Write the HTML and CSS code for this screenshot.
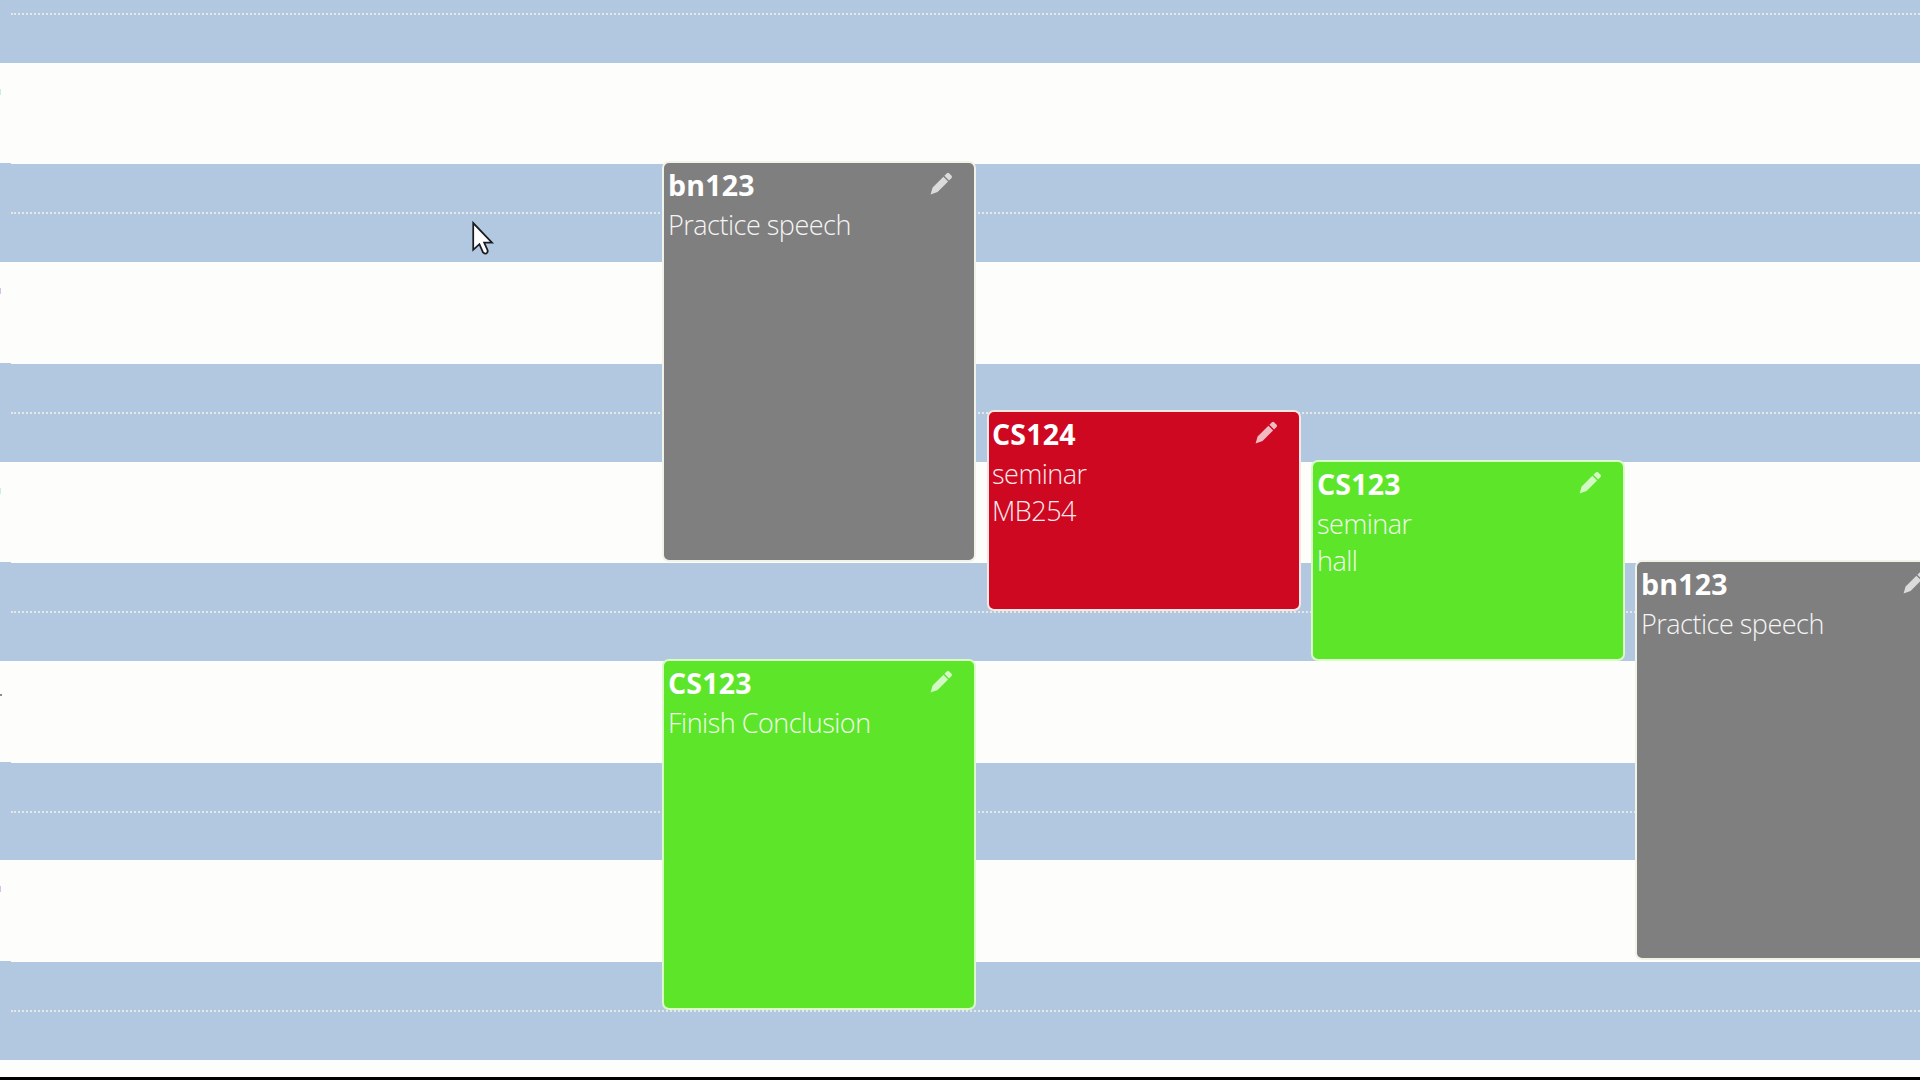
FILE: index.html
```
<!DOCTYPE html>
<html lang="en">
<head>
<meta charset="utf-8">
<title>Timetable</title>
<link rel="stylesheet" href="styles.css">
</head>
<body>
<svg class="defs" width="0" height="0" aria-hidden="true">
  <symbol id="pencil" viewBox="0 0 24 24">
    <path d="M0.6 23.4L2.7 16.2L14 4.9L18.9 9.8L7.9 20.8Z M15 3.9L17.7 1.2Q18.8 0.3 19.9 1.2L22.5 3.8Q23.5 5 22.5 6.2L19.9 8.8Z"/>
  </symbol>
</svg>
<main class="calendar">
  <div class="slots">
    <div class="row first"><i class="gutter"></i><i class="half"></i></div>
    <div class="row plain"><i class="tick pale"></i></div>
    <div class="row"><i class="gutter"></i><i class="half"></i></div>
    <div class="row plain"><i class="tick"></i></div>
    <div class="row"><i class="gutter"></i><i class="half"></i></div>
    <div class="row plain"><i class="tick pale"></i></div>
    <div class="row"><i class="gutter"></i><i class="half"></i></div>
    <div class="row plain"><i class="tick dark"></i></div>
    <div class="row"><i class="gutter"></i><i class="half"></i></div>
    <div class="row plain"><i class="tick"></i></div>
    <div class="row"><i class="gutter"></i><i class="half"></i></div>
    <div class="row tail"></div>
  </div>
  <article class="event grey speech-a">
    <header><h2>bn123</h2><svg class="edit"><use href="#pencil"/></svg></header>
    <p>Practice speech</p>
  </article>
  <article class="event green conclusion">
    <header><h2>CS123</h2><svg class="edit"><use href="#pencil"/></svg></header>
    <p>Finish Conclusion</p>
  </article>
  <article class="event red seminar-a">
    <header><h2>CS124</h2><svg class="edit"><use href="#pencil"/></svg></header>
    <p>seminar</p><p>MB254</p>
  </article>
  <article class="event green seminar-b">
    <header><h2>CS123</h2><svg class="edit"><use href="#pencil"/></svg></header>
    <p>seminar</p><p>hall</p>
  </article>
  <article class="event grey speech-b">
    <header><h2>bn123</h2><svg class="edit"><use href="#pencil"/></svg></header>
    <p>Practice speech</p>
  </article>
  <svg class="cursor" viewBox="0 0 20 32"><path d="M1 1V27L7 21.5L10.5 29.5Q12 31.3 14 30.2Q15.6 29 14.8 27L11.6 20H19.2Z"/></svg>
</main>
</body>
</html>
```
FILE: styles.css
```
* { box-sizing: border-box; }
body { margin: 0; background: #000; overflow: hidden; font-family: "Open Sans", "Noto Sans", sans-serif; }
.defs { display: block; width: 0; height: 0; }
.calendar { position: relative; height: 1077px; overflow: hidden; background: #fdfdfc; }
.slots { display: grid; grid-template-rows: 63px 101px 98px 102px 98px 101px 98px 102px 97px 102px 98px 17px; }
.row { display: grid; grid-template-columns: 11px 1fr; background: #b2c8e0; }
.plain, .tail { background: #fdfdfc; }
.gutter { background: #b2c8e0; margin-top: -1px; }
.half { height: 50px; border-bottom: 2px dotted #e6e8e4; }
.first .half { height: 15px; }
.tick { width: 1px; height: 6px; margin-top: 26px; background: #d8bfe6; }
.tick.pale { background: #c6f0ee; }
.tick.dark { width: 2px; height: 2px; margin-top: 33px; background: #8a8f88; }
.event { position: absolute; width: 314px; border: 2px solid #f1f3e9; border-radius: 7px; padding: 3px 3px 0 4px; color: #fff; }
.event header { display: flex; justify-content: space-between; height: 41px; }
.event h2 { margin: 0; font-size: 28.5px; line-height: 38px; font-weight: 700; letter-spacing: 0.2px; }
.event p { margin: 0; font-size: 27px; line-height: 36.6px; font-weight: 300; letter-spacing: -0.5px; white-space: nowrap; opacity: .92; }
.edit { width: 23px; height: 23px; margin: 6px 18px 0 0; fill: #fff; opacity: .72; }
.grey { background: #7f7f7f; }
.green { background: #5de629; border-color: #dbfbc9; }
.red { background: #cf0822; border-color: #f9e8e2; }
.speech-a { left: 662px; top: 161px; height: 401px; }
.conclusion { left: 662px; top: 659px; height: 351px; }
.seminar-a { left: 987px; top: 410px; height: 201px; }
.seminar-a h2, .seminar-a p { margin-left: -1px; }
.seminar-b { left: 1311px; top: 460px; height: 201px; }
.speech-b { left: 1635px; top: 560px; height: 400px; }
.cursor { position: absolute; left: 472px; top: 222px; width: 21px; height: 33px; fill: #fff; stroke: #1b1b22; stroke-width: 1.7; overflow: visible; }
```
